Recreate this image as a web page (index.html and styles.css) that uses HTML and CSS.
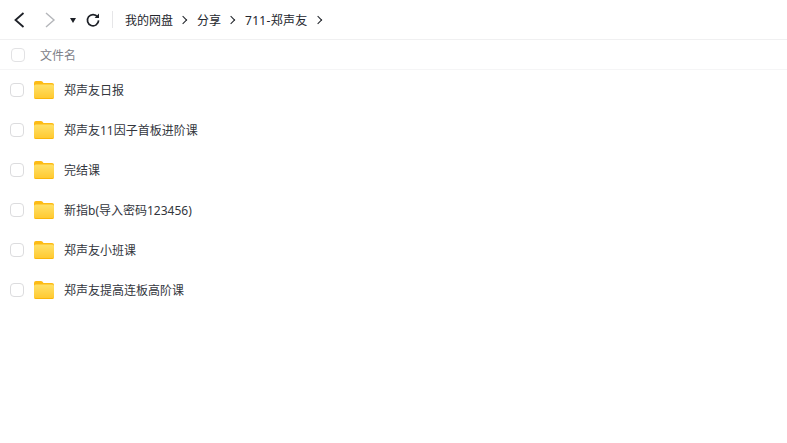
FILE: index.html
```html
<!DOCTYPE html>
<html lang="zh-CN">
<head>
    <meta charset="UTF-8">
    <meta name="viewport" content="width=device-width, initial-scale=1.0">
    <title>我的网盘</title>
    <link rel="stylesheet" href="styles.css">
</head>
<body>
    <div class="toolbar">
        <svg class="nav-icon" width="14" height="18" viewBox="0 0 14 18"><path d="M11.5 2 L3.500 9 L11.5 16" stroke="#1d2027" stroke-width="1.8" fill="none"/></svg>
        <svg class="nav-icon forward" width="14" height="18" viewBox="0 0 14 18"><path d="M3 2 L11 9 L3 16" stroke="#b4b6ba" stroke-width="1.4" fill="none"/></svg>
        <span class="caret"></span>
        <svg class="refresh" width="16" height="16" viewBox="0 0 16 16"><path d="M12.6 5 A5.6 5.6 0 1 0 13.6 8.4" stroke="#1d2027" stroke-width="1.7" fill="none"/><path d="M9.6 5.9 L14 5.9 L14 1.5 Z" fill="#1d2027"/></svg>
        <span class="divider"></span>
        <div class="crumbs">
            <span>我的网盘</span><i class="sep"></i>
            <span>分享</span><i class="sep"></i>
            <span class="crumb-last">711-郑声友</span><i class="sep"></i>
        </div>
    </div>

    <div class="list-head">
        <span class="check head-check"></span>
        <span>文件名</span>
    </div>

    <div class="row">
        <span class="check"></span>
        <svg class="folder" width="22" height="20" viewBox="0 0 22 20"><use href="#folder-shape"/></svg>
        <span>郑声友日报</span>
    </div>
    <div class="row">
        <span class="check"></span>
        <svg class="folder" width="22" height="20" viewBox="0 0 22 20"><use href="#folder-shape"/></svg>
        <span>郑声友11因子首板进阶课</span>
    </div>
    <div class="row">
        <span class="check"></span>
        <svg class="folder" width="22" height="20" viewBox="0 0 22 20"><use href="#folder-shape"/></svg>
        <span>完结课</span>
    </div>
    <div class="row">
        <span class="check"></span>
        <svg class="folder" width="22" height="20" viewBox="0 0 22 20"><use href="#folder-shape"/></svg>
        <span>新指b(导入密码123456)</span>
    </div>
    <div class="row">
        <span class="check"></span>
        <svg class="folder" width="22" height="20" viewBox="0 0 22 20"><use href="#folder-shape"/></svg>
        <span>郑声友小班课</span>
    </div>
    <div class="row">
        <span class="check"></span>
        <svg class="folder" width="22" height="20" viewBox="0 0 22 20"><use href="#folder-shape"/></svg>
        <span>郑声友提高连板高阶课</span>
    </div>

    <svg class="defs" width="0" height="0">
        <defs>
            <linearGradient id="folder-fill" x1="0" y1="0" x2="0" y2="1">
                <stop offset="0" stop-color="#ffe168"/>
                <stop offset="1" stop-color="#ffc82e"/>
            </linearGradient>
            <g id="folder-shape">
                <path d="M1 3 Q1 1 3 1 L8 1 Q9.5 1 10.5 3 L19 3 Q21 3 21 5 L21 10 L1 10 Z" fill="#fdbb14"/>
                <path d="M1 6 Q1 4.500 3 4.500 L19 4.500 Q21 4.500 21 6 L21 17 Q21 19 19 19 L3 19 Q1 19 1 17 Z" fill="url(#folder-fill)"/>
                <path d="M1 17 Q1 19 3 19 L19 19 Q21 19 21 17 L21 16.500 Q21 18 19 18 L3 18 Q1 18 1 16.500 Z" fill="#fab50a"/>
            </g>
        </defs>
    </svg>
</body>
</html>
```

FILE: styles.css
```css
body {
    margin: 0;
    background: #fff;
    color: #33363d;
    font-family: "Noto Sans", "Noto Sans CJK SC", sans-serif;
    font-size: 12px;
}

.toolbar {
    display: flex;
    align-items: center;
    height: 39px;
    padding-left: 12px;
    border-bottom: 1px solid #f0f0f1;
    color: #23262d;
}
.forward {
    margin-left: 17px;
}
.caret {
    width: 0;
    height: 0;
    margin-left: 13px;
    margin-top: 2px;
    border-left: 3px solid transparent;
    border-right: 3px solid transparent;
    border-top: 5px solid #1d2027;
}
.refresh {
    margin-left: 9px;
}
.divider {
    width: 1px;
    height: 17px;
    margin-left: 11px;
    background: #e6e6e8;
}
.crumbs {
    display: flex;
    align-items: center;
    margin-left: 12px;
}
.crumb-last {
    letter-spacing: 0.3px;
}
.sep {
    width: 5px;
    height: 5px;
    margin: 0 11px 0 7px;
    border-top: 1.5px solid #1d2027;
    border-right: 1.5px solid #1d2027;
    transform: rotate(45deg);
}

.list-head {
    display: flex;
    align-items: center;
    height: 29px;
    padding-left: 11px;
    border-bottom: 1px solid #f5f5f6;
    color: #7d8087;
}
.check {
    box-sizing: border-box;
    width: 14px;
    height: 14px;
    border: 1px solid #dcdcde;
    border-radius: 4px;
}
.head-check {
    margin-right: 15px;
    border-color: #e2e2e4;
}

.row {
    display: flex;
    align-items: center;
    height: 40px;
    padding-left: 10px;
}
.folder {
    margin: 0 9px 0 9px;
}
.defs {
    position: absolute;
}
```
